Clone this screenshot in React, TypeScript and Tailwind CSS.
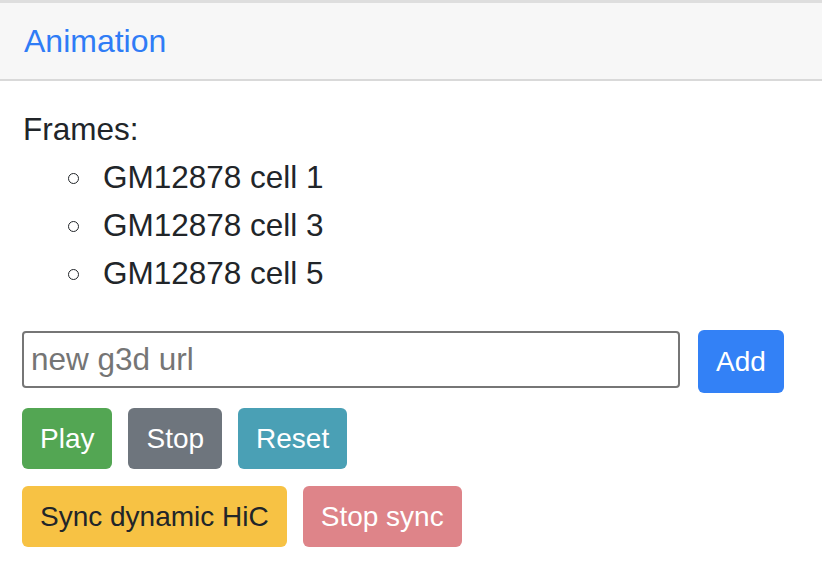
const frames = ["GM12878 cell 1", "GM12878 cell 3", "GM12878 cell 5"];

function Btn({ label, className }: { label: string; className: string }) {
  return (
    <button
      className={
        "h-[61px] px-[18px] rounded-[6px] text-[28px] leading-none " + className
      }
    >
      {label}
    </button>
  );
}

export default function App() {
  return (
    <div className="w-[822px] h-[572px] bg-white font-['Liberation_Sans',Arial,sans-serif] text-[#212529] overflow-hidden">
      <div className="h-[81px] border-t-[3px] border-t-[#dedede] border-b-2 border-b-[#d9d9d9] bg-[#f7f7f7] flex items-center px-6">
        <span className="text-[32px] text-[#2f7cf6]">Animation</span>
      </div>
      <div className="pl-[23px] pt-[24px]">
        <div className="text-[31.5px] leading-[48px]">Frames:</div>
        <ul className="flex flex-col">
          {frames.map((f) => (
            <li key={f} className="flex items-center text-[31.5px] leading-[48px]">
              <span className="ml-[45px] mr-[24px] mt-[3px] w-[11px] h-[11px] rounded-full border-[1.5px] border-[#212529]" />
              {f}
            </li>
          ))}
        </ul>
        <div className="flex items-start gap-[18px] mt-[34px] -ml-px">
          <input
            placeholder="new g3d url"
            className="w-[658px] h-[57px] border-2 border-[#767676] rounded-[4px] px-[7px] text-[31.5px] placeholder:text-[#757575] outline-none"
          />
          <Btn label="Add" className="h-[63px] -mt-px bg-[#3381f6] text-white" />
        </div>
        <div className="flex gap-4 mt-[15px] -ml-px">
          <Btn label="Play" className="bg-[#53a653] text-white" />
          <Btn label="Stop" className="bg-[#6e757d] text-white" />
          <Btn label="Reset" className="bg-[#4aa0b5] text-white" />
        </div>
        <div className="flex gap-4 mt-[17px] -ml-px">
          <Btn label="Sync dynamic HiC" className="bg-[#f7c244] text-[#212529]" />
          <Btn label="Stop sync" className="bg-[#de8489] text-white" />
        </div>
      </div>
    </div>
  );
}
